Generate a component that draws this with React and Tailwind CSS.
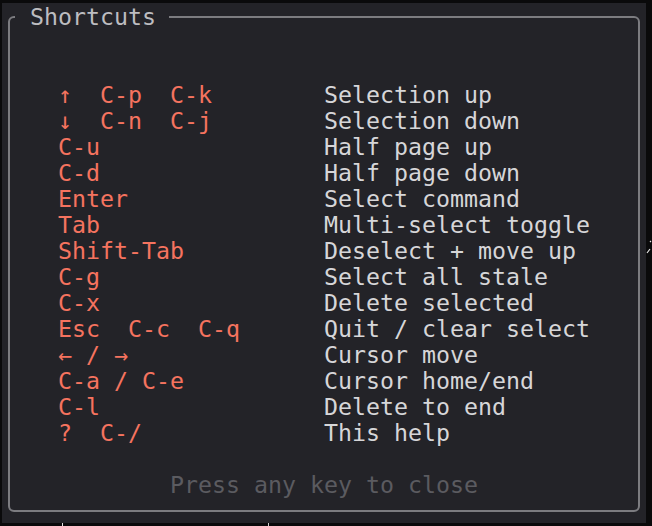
const shortcuts = [
  ["↑  C-p  C-k", "Selection up"],
  ["↓  C-n  C-j", "Selection down"],
  ["C-u", "Half page up"],
  ["C-d", "Half page down"],
  ["Enter", "Select command"],
  ["Tab", "Multi-select toggle"],
  ["Shift-Tab", "Deselect + move up"],
  ["C-g", "Select all stale"],
  ["C-x", "Delete selected"],
  ["Esc  C-c  C-q", "Quit / clear select"],
  ["← / →", "Cursor move"],
  ["C-a / C-e", "Cursor home/end"],
  ["C-l", "Delete to end"],
  ["?  C-/", "This help"],
];

const mono = "font-['DejaVu_Sans_Mono','Liberation_Mono',monospace]";

export default function App() {
  return (
    <div className={`relative w-[652px] h-[526px] overflow-hidden bg-[#0a0a0b] ${mono} text-[23.25px] leading-[26px]`}>
      <div className="ml-[2px] mt-[3px] w-[644px] h-[520px] bg-[#232328] pt-[1px]">
        <fieldset className="ml-[6px] w-[632px] border-2 border-[#7c7c80] rounded-[6px] pb-[12px]">
          <legend className="ml-[5px] pl-[15px] pr-[13px] text-[#bdbdc0] whitespace-pre">Shortcuts</legend>
          <div className="pl-[48px]">
            <div className="h-[52px]" />
            <ul>
              {shortcuts.map(([keys, desc]) => (
                <li key={desc} className="flex whitespace-pre">
                  <span className="w-[266px] shrink-0 text-[#f5735f]">{keys}</span>
                  <span className="text-[#d6d6d8]">{desc}</span>
                </li>
              ))}
            </ul>
            <div className="h-[26px]" />
            <div className="pl-[112px] text-[#5b5b60] whitespace-pre">Press any key to close</div>
          </div>
        </fieldset>
      </div>

      {/* bits of the terminal underneath peeking out */}
      <svg className="absolute left-[646px] top-[240px]" width="6" height="16" viewBox="0 0 6 16">
        <path d="M4 2 L5 1 M1 13 L4 9" stroke="#e5e5e5" strokeWidth="1.2" fill="none" />
      </svg>
      <div className="absolute left-[62px] top-[523px] w-[1px] h-[3px] bg-[#e5e5e5]" />
      <div className="absolute left-[268px] top-[523px] w-[1px] h-[3px] bg-[#cfcfcf]" />
    </div>
  );
}
